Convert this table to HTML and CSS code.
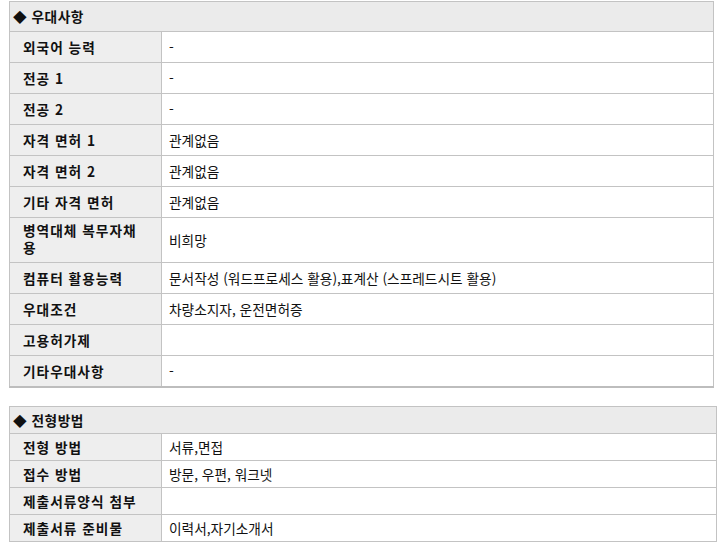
FILE: index.html
```html
<!DOCTYPE html>
<html lang="ko">
<head>
<meta charset="utf-8">
<link rel="stylesheet" href="styles.css">
</head>
<body>
<table class="info info-first">
  <colgroup><col class="col-label"><col></colgroup>
  <tr><th class="head" colspan="2">◆ 우대사항</th></tr>
  <tr><th>외국어 능력</th><td>-</td></tr>
  <tr><th>전공 1</th><td>-</td></tr>
  <tr><th>전공 2</th><td>-</td></tr>
  <tr><th>자격 면허 1</th><td>관계없음</td></tr>
  <tr><th>자격 면허 2</th><td>관계없음</td></tr>
  <tr><th>기타 자격 면허</th><td>관계없음</td></tr>
  <tr><th class="multi">병역대체 복무자채용</th><td>비희망</td></tr>
  <tr><th>컴퓨터 활용능력</th><td>문서작성 (워드프로세스 활용),표계산 (스프레드시트 활용)</td></tr>
  <tr><th>우대조건</th><td>차량소지자, 운전면허증</td></tr>
  <tr><th>고용허가제</th><td></td></tr>
  <tr><th>기타우대사항</th><td>-</td></tr>
</table>
<table class="info info-second">
  <colgroup><col class="col-label"><col></colgroup>
  <tr><th class="head" colspan="2">◆ 전형방법</th></tr>
  <tr><th>전형 방법</th><td>서류,면접</td></tr>
  <tr><th>접수 방법</th><td>방문, 우편, 워크넷</td></tr>
  <tr><th>제출서류양식 첨부</th><td></td></tr>
  <tr><th>제출서류 준비물</th><td>이력서,자기소개서</td></tr>
</table>
</body>
</html>
```
FILE: styles.css
```css
html, body {
  margin: 0;
  padding: 0;
  background: #fff;
}
body {
  padding: 1px 0 0 9px;
  font-family: "Noto Sans CJK KR", "Noto Sans", sans-serif;
  font-size: 13.7px;
  color: #111;
}
.info {
  border-collapse: collapse;
  table-layout: fixed;
}
.info .col-label {
  width: 152px;
}
.info-first {
  width: 705px;
  border-bottom: 2px solid #bdbdbd;
}
.info-second {
  width: 708px;
  margin-top: 18px;
}
.info th, .info td {
  border: 1px solid #c3c3c3;
  line-height: 14px;
  text-align: left;
  vertical-align: middle;
}
.info th {
  background: #eeeeee;
  font-weight: 700;
  letter-spacing: 1px;
  padding: 8px 18px 8px 13px;
}
.info td {
  background: #fff;
  font-weight: 400;
  padding: 8px 6px 8px 7px;
}
.info th.head {
  background: #ebebeb;
  letter-spacing: 0.5px;
  padding: 7px 3px 8px 3px;
}
.info-first th.multi {
  line-height: 17px;
  padding-top: 4px;
  padding-bottom: 6px;
}
.info-second th, .info-second td,
.info-second th.head {
  padding-top: 6px;
  padding-bottom: 6px;
}
```
